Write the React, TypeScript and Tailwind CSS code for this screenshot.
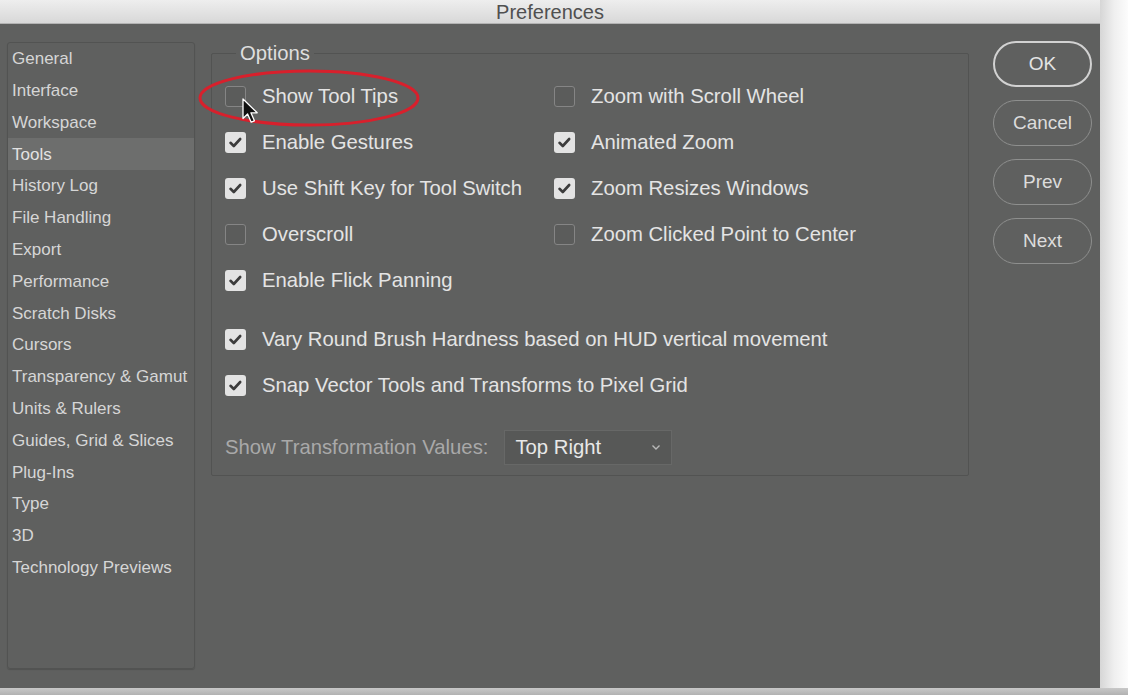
const sidebarItems = [
  'General',
  'Interface',
  'Workspace',
  'Tools',
  'History Log',
  'File Handling',
  'Export',
  'Performance',
  'Scratch Disks',
  'Cursors',
  'Transparency & Gamut',
  'Units & Rulers',
  'Guides, Grid & Slices',
  'Plug-Ins',
  'Type',
  '3D',
  'Technology Previews',
];

type Option = { label: string; checked: boolean };

const gridOptions: Option[][] = [
  [
    { label: 'Show Tool Tips', checked: false },
    { label: 'Zoom with Scroll Wheel', checked: false },
  ],
  [
    { label: 'Enable Gestures', checked: true },
    { label: 'Animated Zoom', checked: true },
  ],
  [
    { label: 'Use Shift Key for Tool Switch', checked: true },
    { label: 'Zoom Resizes Windows', checked: true },
  ],
  [
    { label: 'Overscroll', checked: false },
    { label: 'Zoom Clicked Point to Center', checked: false },
  ],
  [{ label: 'Enable Flick Panning', checked: true }],
];

const wideOptions: Option[] = [
  { label: 'Vary Round Brush Hardness based on HUD vertical movement', checked: true },
  { label: 'Snap Vector Tools and Transforms to Pixel Grid', checked: true },
];

const buttons = ['OK', 'Cancel', 'Prev', 'Next'];

function Checkbox({ checked }: { checked: boolean }) {
  if (checked) {
    return (
      <span className="flex h-[21px] w-[21px] shrink-0 items-center justify-center rounded-[3px] bg-[#e3e3e3]">
        <svg width="21" height="21" viewBox="0 0 21 21">
          <path
            d="M5.5 10.8 L8.8 14 L15.2 7"
            fill="none"
            stroke="#3c3c3c"
            strokeWidth="2.6"
            strokeLinecap="round"
            strokeLinejoin="round"
          />
        </svg>
      </span>
    );
  }
  return (
    <span className="h-[21px] w-[21px] shrink-0 rounded-[3px] border border-[#858585] bg-[#5b5c5b]" />
  );
}

function OptionRow({ option }: { option: Option }) {
  return (
    <div className="flex h-[46px] items-center gap-[16px]">
      <Checkbox checked={option.checked} />
      <span className="whitespace-nowrap text-[20.3px] text-[#e4e4e4]">{option.label}</span>
    </div>
  );
}

export default function App() {
  return (
    <div
      className="flex h-[695px] w-[1128px] flex-col overflow-hidden bg-white"
      style={{ fontFamily: '"Liberation Sans", Arial, sans-serif' }}
    >
      <div className="flex h-[688px]">
        <div className="flex w-[1100px] flex-col">
          <div className="flex h-[24px] shrink-0 items-center justify-center border-b border-[#b3b3b3] bg-gradient-to-b from-[#eeeeee] to-[#d8d8d8]">
            <span className="text-[20px] leading-none text-[#505050]">Preferences</span>
          </div>

          <div className="relative flex flex-1 items-start bg-[#5f605f]">
            <div className="ml-[7px] mt-[18px] h-[627px] w-[188px] rounded-[3px] border border-[#525352] shadow-[0_1px_1px_rgba(0,0,0,0.15)]">
              {sidebarItems.map((item) => (
                <div
                  key={item}
                  className={
                    item === 'Tools'
                      ? 'flex h-[31.8px] items-center bg-[#6d6e6d] pl-[4px] text-[17px] text-[#e2e2e2]'
                      : 'flex h-[31.8px] items-center pl-[4px] text-[17px] text-[#d6d6d6]'
                  }
                >
                  {item}
                </div>
              ))}
            </div>

            <fieldset className="ml-[16px] mt-[18px] h-[434px] w-[758px] rounded-[2px] border border-[#525352] pl-[13px] pt-[9px]">
              <legend className="ml-[11px] px-[4px] text-[20.3px] leading-[22px] text-[#dedede]">
                Options
              </legend>
              <div className="grid grid-cols-[329px_1fr]">
                {gridOptions.map((row) =>
                  row.map((option) => <OptionRow key={option.label} option={option} />),
                )}
              </div>
              <div className="mt-[13px]">
                {wideOptions.map((option) => (
                  <OptionRow key={option.label} option={option} />
                ))}
              </div>
              <div className="mt-[16px] flex h-[46px] items-center">
                <span className="text-[20.3px] text-[#a9a9a9]">Show Transformation Values:</span>
                <div className="ml-[16px] flex h-[35px] w-[168px] items-center justify-between border border-[#676867] bg-[#575857] pl-[10px] pr-[10px]">
                  <span className="text-[20.3px] text-[#e8e8e8]">Top Right</span>
                  <svg width="10" height="7" viewBox="0 0 10 7">
                    <path d="M1.5 1.5 L5 5 L8.5 1.5" fill="none" stroke="#b8b8b8" strokeWidth="1.4" />
                  </svg>
                </div>
              </div>
            </fieldset>

            <div className="ml-[24px] mt-[17px] flex flex-col gap-[13px]">
              {buttons.map((label) => (
                <div
                  key={label}
                  className={
                    label === 'OK'
                      ? 'flex h-[46px] w-[99px] items-center justify-center rounded-full border-2 border-[#d2d2d2] text-[19px] text-[#e4e4e4]'
                      : 'flex h-[46px] w-[99px] items-center justify-center rounded-full border border-[#8e8f8e] text-[19px] text-[#dcdcdc]'
                  }
                >
                  {label}
                </div>
              ))}
            </div>

            <svg
              className="pointer-events-none absolute left-[197px] top-[44px]"
              width="226"
              height="60"
              viewBox="0 0 226 60"
            >
              <ellipse cx="112" cy="30" rx="109" ry="27" fill="none" stroke="#d8202c" strokeWidth="3" />
            </svg>

            <svg
              className="pointer-events-none absolute left-[242px] top-[74px]"
              width="18"
              height="27"
              viewBox="0 0 18 27"
            >
              <path
                d="M1 1 L1 20.5 L5.6 16 L9.2 24.2 L12.4 22.8 L8.9 14.8 L15.2 14.8 Z"
                fill="#111"
                stroke="#fff"
                strokeWidth="1.3"
                strokeLinejoin="round"
              />
            </svg>
          </div>
        </div>
        <div className="flex-1 bg-gradient-to-r from-[#d6d6d6] via-[#efefef] to-[#fcfcfc]" />
      </div>
      <div className="h-[7px] bg-gradient-to-b from-[#c8c8c8] to-[#b1b1b1]" />
    </div>
  );
}
